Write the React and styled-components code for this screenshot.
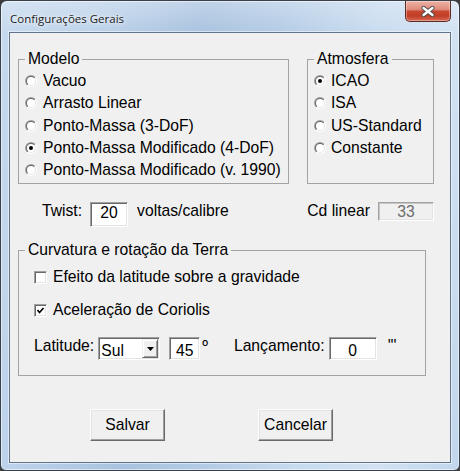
import React from "react";
import styled, { createGlobalStyle } from "styled-components";

const GlobalStyle = createGlobalStyle`
  html, body {
    margin: 0;
    padding: 0;
    background: #3c3c3c;
  }
  body {
    font-family: "Liberation Sans", Arial, sans-serif;
  }
`;

const Window = styled.div`
  box-sizing: border-box;
  width: 460px;
  height: 471px;
  border: 1px solid #3a4049;
  border-radius: 7px 7px 6px 6px;
  padding: 0 8px 7px 8px;
  display: flex;
  flex-direction: column;
  overflow: hidden;
  background:
    linear-gradient(180deg, rgba(255, 255, 255, 0.28) 0, rgba(255, 255, 255, 0) 34px),
    linear-gradient(100deg, #c5d9ee 0%, #bcd2ea 18%, #a8c2df 38%, #b3cbe5 52%, #c8dbef 70%, #d2e2f3 85%, #c0d6ec 100%);
  box-shadow: inset 0 0 0 1px rgba(255, 255, 255, 0.55);
`;

const TitleBar = styled.div`
  height: 31px;
  flex-shrink: 0;
  display: flex;
  align-items: flex-start;
`;

const Title = styled.span`
  font-family: "Open Sans", "Noto Sans", sans-serif;
  font-size: 11.5px;
  line-height: 15px;
  color: #1a1a1a;
  margin: 10px 0 0 1px;
  text-shadow: 0 0 6px rgba(255, 255, 255, 0.9), 0 0 3px rgba(255, 255, 255, 0.8);
`;

const CloseButton = styled.div`
  box-sizing: border-box;
  width: 46px;
  height: 21px;
  margin-left: auto;
  border: 1px solid #5e2a24;
  border-top: none;
  border-radius: 0 0 5px 5px;
  display: flex;
  align-items: center;
  justify-content: center;
  background: linear-gradient(180deg, #ebb3a6 0%, #df8c7b 42%, #c9462f 52%, #c23d27 75%, #d76a52 100%);
  box-shadow: inset 0 0 0 1px rgba(255, 255, 255, 0.35);
`;

const Client = styled.div`
  flex: 1;
  display: flex;
  flex-direction: column;
  background: #f0f0f0;
  border: 1px solid #62748a;
  box-shadow: 0 0 0 1px rgba(255, 255, 255, 0.5);
  font-size: 15.7px;
  line-height: 18px;
  color: #000;
`;

const TopRow = styled.div`
  display: flex;
  gap: 18px;
  margin: 17px 0 0 8px;
`;

const Group = styled.fieldset`
  box-sizing: border-box;
  width: ${(p) => p.$w}px;
  height: ${(p) => p.$h}px;
  margin: ${(p) => p.$mt || 0}px 0 0 ${(p) => p.$ml || 0}px;
  padding: ${(p) => p.$pt || 0}px 6px 0 6px;
  border: 1px solid #a3a3a3;
  min-width: 0;
`;

const Legend = styled.legend`
  padding: 0 3px;
  line-height: 18px;
`;

const OptionRow = styled.label`
  display: flex;
  align-items: center;
  gap: ${(p) => p.$gap || 6}px;
  height: 22.25px;
  white-space: nowrap;
`;

const RadioSvg = styled.svg`
  flex-shrink: 0;
  display: block;
`;

const FieldRow = styled.div`
  display: flex;
  align-items: flex-start;
  margin: ${(p) => p.$mt || 0}px 0 0 ${(p) => p.$ml || 0}px;
  white-space: nowrap;
`;

const Text = styled.span`
  line-height: 18px;
  margin-left: ${(p) => p.$ml || 0}px;
  margin-right: ${(p) => p.$mr || 0}px;
`;

const Field = styled.input`
  box-sizing: border-box;
  width: ${(p) => p.$w}px;
  height: ${(p) => p.$h}px;
  margin: 0 ${(p) => p.$mr || 0}px 0 ${(p) => p.$ml || 0}px;
  padding: ${(p) => p.$pt || 0}px 0 ${(p) => p.$pb || 0}px 0;
  font-family: inherit;
  font-size: 15.7px;
  line-height: 18px;
  text-align: center;
  color: #000;
  background: #fff;
  border: 1px solid;
  border-color: #a0a0a0 #fff #fff #a0a0a0;
  box-shadow: inset 1px 1px #696969, inset -1px -1px #e3e3e3;
  outline: none;

  &:disabled {
    background: #f0f0f0;
    color: #6d6d6d;
    -webkit-text-fill-color: #6d6d6d;
    opacity: 1;
    border-color: #a0a0a0 #fff #fff #a0a0a0;
    box-shadow: inset 1px 1px #c8c8c8, inset -1px -1px #e3e3e3;
  }
`;

const CheckRow = styled.label`
  display: flex;
  align-items: center;
  gap: 6px;
  margin: ${(p) => p.$mt || 0}px 0 0 9px;
  white-space: nowrap;
`;

const CheckBox = styled.span`
  box-sizing: border-box;
  width: 13px;
  height: 13px;
  flex-shrink: 0;
  display: flex;
  align-items: center;
  justify-content: center;
  background: #fff;
  border: 1px solid;
  border-color: #a0a0a0 #fff #fff #a0a0a0;
  box-shadow: inset 1px 1px #696969, inset -1px -1px #e3e3e3;
`;

const Combo = styled.div`
  box-sizing: border-box;
  width: 62px;
  height: 23px;
  margin-left: 4px;
  padding: 1px;
  display: flex;
  background: #fff;
  border: 1px solid;
  border-color: #a0a0a0 #fff #fff #a0a0a0;
  box-shadow: inset 1px 1px #696969, inset -1px -1px #e3e3e3;
`;

const ComboText = styled.span`
  flex: 1;
  padding: 3.5px 0 0 1px;
  line-height: 16px;
`;

const DropButton = styled.span`
  box-sizing: border-box;
  width: 16px;
  height: 19px;
  display: flex;
  align-items: center;
  justify-content: center;
  background: #f0f0f0;
  border: 1px solid;
  border-color: #f0f0f0 #696969 #696969 #f0f0f0;
  box-shadow: inset 1px 1px #fff, inset -1px -1px #a0a0a0;
`;

const ButtonRow = styled.div`
  display: flex;
  gap: 93px;
  margin: 33px 0 0 80px;
`;

const Button = styled.button`
  box-sizing: border-box;
  width: 75px;
  height: 32px;
  padding: 0;
  font-family: inherit;
  font-size: 15.7px;
  color: #000;
  background: #f0f0f0;
  border: 1px solid;
  border-color: #fff #696969 #696969 #fff;
  box-shadow: inset -1px -1px #a0a0a0, inset 1px 1px #e3e3e3;
`;

const Radio = ({ checked }) => (
  <RadioSvg width="12" height="12" viewBox="0 0 12 12">
    <defs>
      <linearGradient id="radOuter" x1="0" y1="0" x2="1" y2="1">
        <stop offset="0.5" stopColor="#a0a0a0" />
        <stop offset="0.5" stopColor="#ffffff" />
      </linearGradient>
      <linearGradient id="radInner" x1="0" y1="0" x2="1" y2="1">
        <stop offset="0.5" stopColor="#696969" />
        <stop offset="0.5" stopColor="#e3e3e3" />
      </linearGradient>
    </defs>
    <circle cx="6" cy="6" r="6" fill="url(#radOuter)" />
    <circle cx="6" cy="6" r="5" fill="url(#radInner)" />
    <circle cx="6" cy="6" r="4" fill="#fff" />
    {checked && <circle cx="6" cy="6" r="2" fill="#000" />}
  </RadioSvg>
);

const Check = ({ checked }) => (
  <CheckBox>
    {checked && (
      <svg width="9" height="9" viewBox="0 0 9 9">
        <polyline points="1.5,4 3.5,6.5 7.5,2" fill="none" stroke="#000" strokeWidth="1.7" />
      </svg>
    )}
  </CheckBox>
);

const modelos = [
  "Vacuo",
  "Arrasto Linear",
  "Ponto-Massa (3-DoF)",
  "Ponto-Massa Modificado (4-DoF)",
  "Ponto-Massa Modificado (v. 1990)",
];

const atmosferas = ["ICAO", "ISA", "US-Standard", "Constante"];

export default function App() {
  return (
    <>
      <GlobalStyle />
      <Window>
        <TitleBar>
          <Title>Configurações Gerais</Title>
          <CloseButton>
            <svg width="14" height="11" viewBox="0 0 14 11">
              <path d="M2.5 2 L11.5 9 M11.5 2 L2.5 9" stroke="#4a4a4a" strokeWidth="4.2" strokeLinecap="round" />
              <path d="M2.5 2 L11.5 9 M11.5 2 L2.5 9" stroke="#fff" strokeWidth="2.4" strokeLinecap="round" />
            </svg>
          </CloseButton>
        </TitleBar>

        <Client>
          <TopRow>
            <Group $w={271} $h={134} $pt={2}>
              <Legend>Modelo</Legend>
              {modelos.map((m, i) => (
                <OptionRow key={m}>
                  <Radio checked={i === 3} />
                  {m}
                </OptionRow>
              ))}
            </Group>
            <Group $w={127} $h={134} $pt={2}>
              <Legend>Atmosfera</Legend>
              {atmosferas.map((a, i) => (
                <OptionRow key={a} $gap={5}>
                  <Radio checked={i === 0} />
                  {a}
                </OptionRow>
              ))}
            </Group>
          </TopRow>

          <FieldRow $mt={18} $ml={32}>
            <Text>Twist:</Text>
            <Field $w={38} $h={25} $ml={8} $pb={3} defaultValue="20" />
            <Text $ml={9}>voltas/calibre</Text>
            <Text style={{ marginLeft: "auto" }} $mr={8}>Cd linear</Text>
            <Field $w={56} $h={19} $mr={16} defaultValue="33" disabled />
          </FieldRow>

          <Group $w={408} $h={135} $mt={14} $ml={8} $pt={9}>
            <Legend>Curvatura e rotação da Terra</Legend>
            <CheckRow>
              <Check />
              Efeito da latitude sobre a gravidade
            </CheckRow>
            <CheckRow $mt={15}>
              <Check checked />
              Aceleração de Coriolis
            </CheckRow>
            <FieldRow $mt={18} $ml={9}>
              <Text>Latitude:</Text>
              <Combo>
                <ComboText>Sul</ComboText>
                <DropButton>
                  <svg width="7" height="4" viewBox="0 0 7 4">
                    <polygon points="0,0 7,0 3.5,4" fill="#000" />
                  </svg>
                </DropButton>
              </Combo>
              <Field $w={31} $h={23} $ml={9} $pt={4} defaultValue="45" />
              <Text $ml={2}>º</Text>
              <Text $ml={26}>Lançamento:</Text>
              <Field $w={48} $h={23} $ml={4} $pt={4} defaultValue="0" />
              <Text $ml={11}>'''</Text>
            </FieldRow>
          </Group>

          <ButtonRow>
            <Button>Salvar</Button>
            <Button>Cancelar</Button>
          </ButtonRow>
        </Client>
      </Window>
    </>
  );
}
